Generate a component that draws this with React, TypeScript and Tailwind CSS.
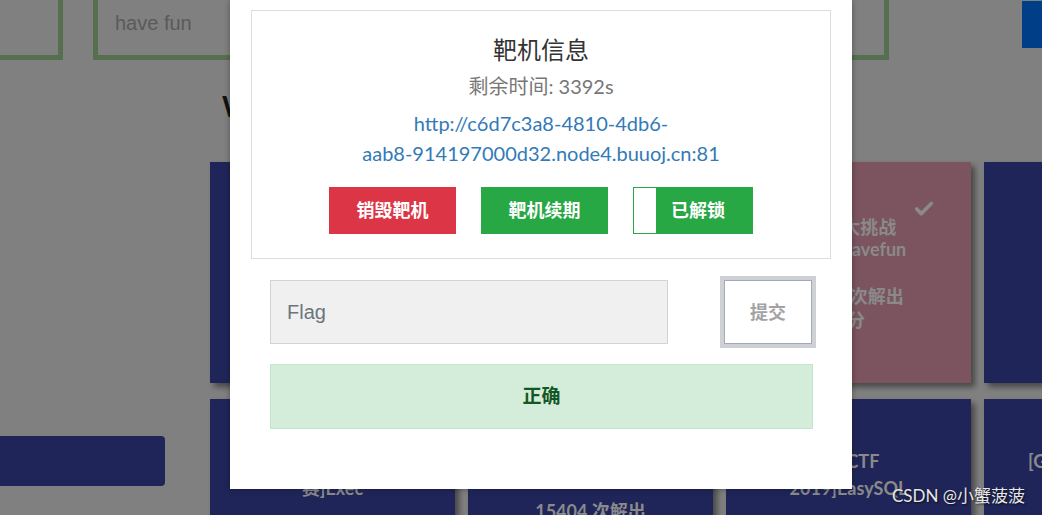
import React from 'react';
import { Check } from 'lucide-react';

const cards = [
  { title: '[HCTF 2018]WarmUp', solves: '30512 次解出', score: '1 分', pink: false },
  { title: '[ACTF2020 新生赛]Include', solves: '21874 次解出', score: '1 分', pink: false },
  { title: '[极客大挑战 2019]Havefun', solves: '19762 次解出', score: '1 分', pink: true },
  { title: '[极客大挑战 2019]EasySQL', solves: '28641 次解出', score: '1 分', pink: false },
  { title: '[ACTF2020 新生赛]Exec', solves: '16082 次解出', score: '1 分', pink: false },
  { title: '[强网杯 2019]随便注', solves: '15404 次解出', score: '1 分', pink: false },
  { title: '[SUCTF 2019]EasySQL', solves: '11237 次解出', score: '1 分', pink: false },
  { title: '[GXYCTF2019]Ping Ping Ping', solves: '13308 次解出', score: '1 分', pink: false },
];

const cjk = "font-['Lato','Noto_Sans_CJK_SC',sans-serif]";

function Card({ title, solves, score, pink, second }: (typeof cards)[number] & { second: boolean }) {
  return (
    <div className={`relative h-[221px] flex flex-col items-center px-[36px] text-center font-bold text-[18px] text-[#8a8a8a] shadow-[4px_4px_6px_rgba(0,0,0,0.45)] ${second ? 'pt-[49px]' : 'pt-[54px]'} ${pink ? 'bg-[#7b5460]' : 'bg-[#1f2559]'}`}>
      {pink && <Check size={22} strokeWidth={4} className="absolute right-[36px] top-[36px] text-[#8a8a8a]" />}
      <div className={second ? 'leading-[27px]' : 'leading-[22px]'}>{title}</div>
      <div className="mt-[24px] leading-[24px]">{solves}</div>
      <div className="leading-[24px]">{score}</div>
    </div>
  );
}

export default function App() {
  return (
    <div className={`relative w-[1042px] h-[515px] overflow-hidden bg-[#808080] ${cjk}`}>
      {/* dimmed page behind the modal */}
      <div className="flex items-start -mt-[20px]">
        <div className="shrink-0 -ml-[40px] w-[103px] h-[80px] border-[5px] border-[#56704f]" />
        <div className="shrink-0 ml-[30px] w-[796px] h-[80px] border-[5px] border-[#56704f] pl-[17px] pt-[26px] font-['Liberation_Sans',Arial,sans-serif] text-[20px] leading-[24px] text-[#5a5a5a]">
          have fun
        </div>
        <div className="shrink-0 ml-[133px] mt-[21px] w-[30px] h-[47px] bg-[#003f87]" />
      </div>

      <div className="pl-[222px] mt-[30px] text-[28px] font-bold leading-[32px] text-[#111]">Web</div>

      <div className="flex mt-[40px]">
        <div className="w-[210px] shrink-0">
          <div className="-ml-[20px] mt-[274px] w-[185px] h-[50px] rounded-[4px] bg-[#1f2559]" />
        </div>
        <div className="grid grid-cols-[repeat(4,245px)] gap-x-[13px] gap-y-[16px] shrink-0">
          {cards.map((c, i) => (
            <Card key={c.title} {...c} second={i >= 4} />
          ))}
        </div>
      </div>

      <div className="absolute right-[17px] bottom-[9px] text-[17px] leading-[20px] text-[#e6e6e6] [text-shadow:1px_1px_2px_rgba(0,0,0,0.7)]">
        CSDN @小蟹菠菠
      </div>

      {/* modal */}
      <div className="absolute left-[230px] top-0 w-[622px] h-[489px] bg-white px-[21px] pt-[10px] shadow-[0_0_6px_rgba(0,0,0,0.35)]">
        <div className="border border-[#dddddd] pt-[23px] pb-[24px] flex flex-col items-center text-center">
          <div className="text-[24px] leading-[32px] text-[#333333]">靶机信息</div>
          <div className="mt-[7px] text-[20px] leading-[26px] text-[#777777]">剩余时间: 3392s</div>
          <a href="#" className="mt-[9px] text-[20px] leading-[30px] text-[#337ab7]">
            http://c6d7c3a8-4810-4db6-
            <br />
            aab8-914197000d32.node4.buuoj.cn:81
          </a>
          <div className="mt-[19px] flex gap-[25px] text-[18px] font-bold text-white">
            <button className="w-[127px] h-[47px] bg-[#dc3545]">销毁靶机</button>
            <button className="w-[127px] h-[47px] bg-[#28a745]">靶机续期</button>
            <button className="relative w-[120px] h-[47px] bg-[#28a745] border border-[#28a745]">
              <span className="absolute left-0 top-0 h-full w-[22px] bg-white" />
              <span className="relative pl-[10px]">已解锁</span>
            </button>
          </div>
        </div>

        <div className="ml-[19px] w-[546px] mt-[17px] flex items-center justify-between">
          <div className="w-[398px] h-[64px] bg-[#f0f0f0] border border-[#cfd3da] pl-[16px] flex items-center font-['Liberation_Sans',Arial,sans-serif] text-[20px] text-[#6c757d]">
            Flag
          </div>
          <button className="w-[96px] h-[72px] border-[4px] border-[#cdd1d5] bg-white">
            <div className="h-full border border-[#a6abb1] flex items-center justify-center text-[18px] font-bold text-[#a3a3a3]">提交</div>
          </button>
        </div>

        <div className="ml-[19px] mt-[16px] w-[543px] h-[65px] bg-[#d4edda] border border-[#c3e6cb] flex items-center justify-center text-[19px] font-bold text-[#155724]">
          正确
        </div>
      </div>
    </div>
  );
}
